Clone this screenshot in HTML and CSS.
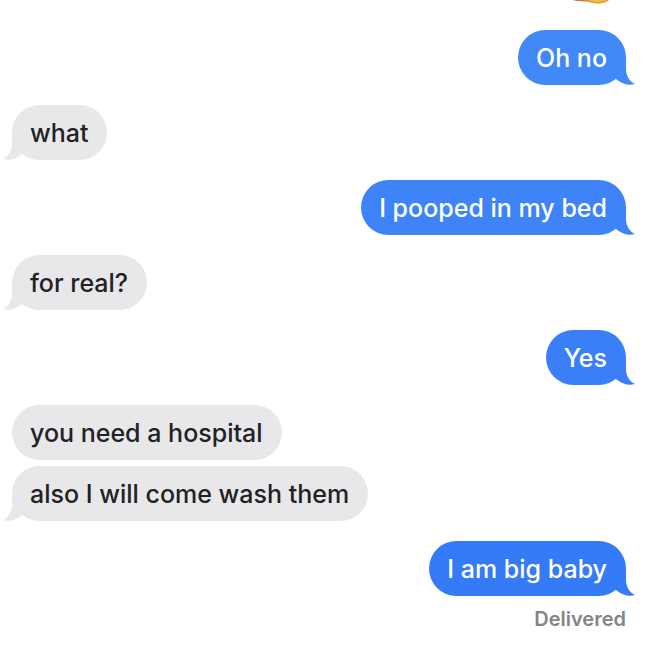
FILE: index.html
```
<!DOCTYPE html>
<html lang="en">
<head>
<meta charset="utf-8">
<meta name="viewport" content="width=device-width, initial-scale=1">
<title>Messages</title>
<link rel="stylesheet" href="styles.css">
</head>
<body>
<svg width="0" height="0" class="defs" aria-hidden="true">
  <symbol id="tail" viewBox="0 0 22 26">
    <path d="M0 0H13V10C13 17 17 23 22 25C16 27 9 25 3 20Z"/>
  </symbol>
</svg>
<main class="thread">
  <div class="attachment">
    <svg class="emoji" viewBox="0 0 40 4" aria-hidden="true">
      <path d="M2 0H19L16 1.4C11 1.6 6 1.2 2 0Z" fill="#c8793d"/>
      <path d="M13 0H38C34 4.4 20 4.8 13 0Z" fill="#d9a032"/>
      <path d="M18 0H36C31 2.8 22 2.6 18 0Z" fill="#efbd42"/>
    </svg>
  </div>
  <div class="group sent">
    <p class="bubble tone-1">Oh no<svg class="tail" aria-hidden="true"><use href="#tail"/></svg></p>
  </div>
  <div class="group received">
    <p class="bubble">what<svg class="tail" aria-hidden="true"><use href="#tail"/></svg></p>
  </div>
  <div class="group sent">
    <p class="bubble tone-2">I pooped in my bed<svg class="tail" aria-hidden="true"><use href="#tail"/></svg></p>
  </div>
  <div class="group received">
    <p class="bubble">for real?<svg class="tail" aria-hidden="true"><use href="#tail"/></svg></p>
  </div>
  <div class="group sent">
    <p class="bubble tone-3">Yes<svg class="tail" aria-hidden="true"><use href="#tail"/></svg></p>
  </div>
  <div class="group received">
    <p class="bubble">you need a hospital</p>
    <p class="bubble">also I will come wash them<svg class="tail" aria-hidden="true"><use href="#tail"/></svg></p>
  </div>
  <div class="group sent">
    <p class="bubble tone-4">I am big baby<svg class="tail" aria-hidden="true"><use href="#tail"/></svg></p>
    <p class="status">Delivered</p>
  </div>
</main>
</body>
</html>
```
FILE: styles.css
```
body {
  margin: 0;
  background: #fff;
  color: #222224;
  font-family: Inter, "Liberation Sans", sans-serif;
}

.defs {
  position: absolute;
}

.thread {
  display: flex;
  flex-direction: column;
  gap: 20px;
  padding: 0 24px 20px 12px;
}

.attachment {
  display: flex;
  justify-content: flex-end;
  height: 10px;
  padding-right: 15px;
}

.emoji {
  width: 40px;
  height: 4px;
}

.group {
  display: flex;
  flex-direction: column;
  gap: 6px;
}

.sent {
  align-items: flex-end;
}

.received {
  align-items: flex-start;
}

.bubble {
  --fill: #e8e8ea;
  position: relative;
  margin: 0;
  padding: 12px 19px 11px 18px;
  border-radius: 28px;
  background: var(--fill);
  font-size: 25px;
  font-weight: 500;
  line-height: 32px;
}

.sent .bubble {
  color: #fff;
}

.bubble.tone-1 { --fill: #4189f7; }
.bubble.tone-2 { --fill: #3e84f8; }
.bubble.tone-3 { --fill: #3a7ff8; }
.bubble.tone-4 { --fill: #357af6; }

.tail {
  position: absolute;
  right: -9px;
  bottom: 0;
  width: 22px;
  height: 26px;
  fill: var(--fill);
}

.received .tail {
  right: auto;
  left: -9px;
  transform: scaleX(-1);
}

.status {
  margin: 4px 0 0;
  color: #848486;
  font-size: 20px;
  font-weight: 600;
  line-height: 26px;
}
```
